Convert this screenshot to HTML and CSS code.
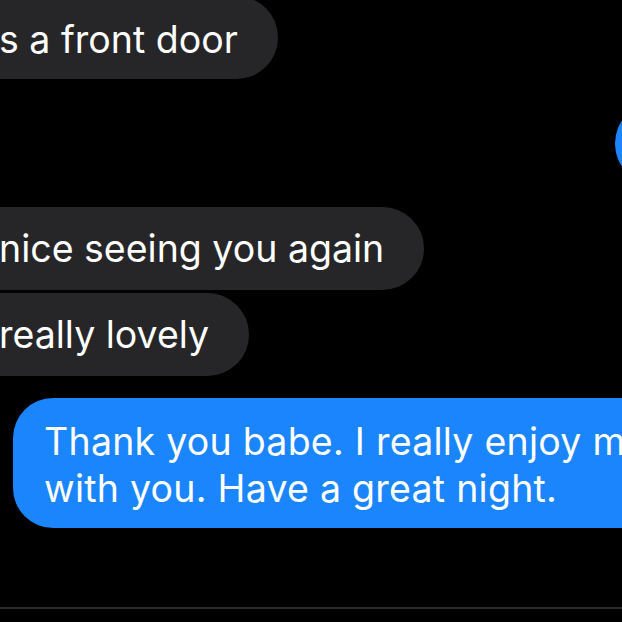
FILE: index.html
```html
<!DOCTYPE html>
<html>
<head>
<meta charset="utf-8">
<link rel="stylesheet" href="styles.css">
</head>
<body>
<div class="chat">
  <div class="row left first"><div class="bubble gray">s a front door</div></div>
  <div class="row right-peek"><div class="bubble blue peek"></div></div>
  <div class="row left group-start"><div class="bubble gray">nice seeing you again</div></div>
  <div class="row left tight"><div class="bubble gray">really lovely</div></div>
  <div class="row sent"><div class="bubble blue big">Thank you babe. I really enjoy my<br>with you. Have a great night.</div></div>
  <div class="divider"></div>
</div>
</body>
</html>
```

FILE: styles.css
```css
html, body {
  margin: 0;
  padding: 0;
  background: #000;
  width: 622px;
  height: 622px;
  overflow: hidden;
}

.chat {
  display: flex;
  flex-direction: column;
  width: 622px;
  font-family: "Inter", "Noto Sans", sans-serif;
  font-size: 37.5px;
  line-height: 47px;
  color: #fff;
}

.row {
  display: flex;
}

.bubble {
  padding: 18px 0;
  border-radius: 42px;
  white-space: nowrap;
  flex: none;
}

.gray {
  background: #262628;
  padding-left: 0;
  padding-right: 40px;
  margin-left: -1px;
  border-top-left-radius: 0;
  border-bottom-left-radius: 0;
}

.blue {
  background: #1a85fd;
}

.first {
  margin-top: -4px;
}

.first .bubble {
  padding-top: 20px;
  padding-bottom: 16px;
}

.right-peek {
  margin-top: 23px;
  padding-left: 615px;
}

.peek {
  width: 200px;
  height: 47px;
}

.group-start {
  margin-top: 22px;
}

.tight {
  margin-top: 3px;
}

.sent {
  margin-top: 22px;
  padding-left: 13px;
}

.big {
  padding-top: 20px;
  padding-bottom: 16px;
  padding-left: 31px;
  padding-right: 60px;
  letter-spacing: 0.25px;
  border-radius: 40px;
}

.divider {
  margin-top: 79px;
  height: 2px;
  background: #2a2a2c;
}
```
